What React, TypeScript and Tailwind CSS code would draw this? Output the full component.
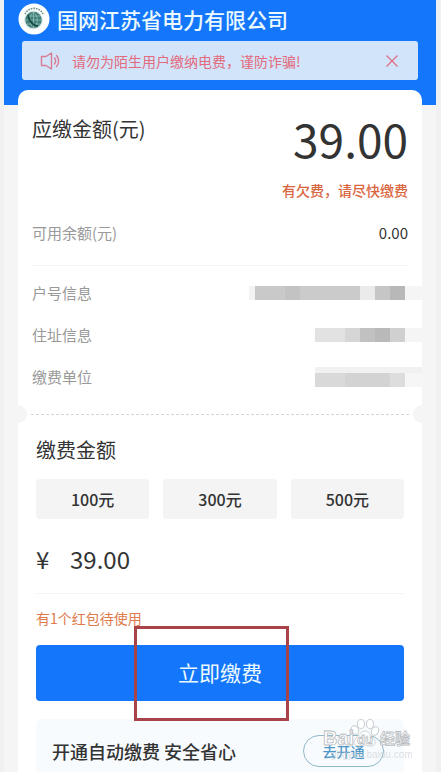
import React from "react";

const details = [
  {
    label: "户号信息",
    bar: "h-3.5",
    cells: [
      ["w-1.5", "bg-[#f3f3f3]"],
      ["w-[30px]", "bg-[#c9c9c9]"],
      ["w-[15px]", "bg-[#c3c3c3]"],
      ["w-[60px]", "bg-[#cbcbcb]"],
      ["w-[15px]", "bg-[#ebebeb]"],
      ["w-[15px]", "bg-[#c6c6c6]"],
      ["w-[15px]", "bg-[#b8b8b8]"],
      ["w-[17px]", "bg-[#f5f5f5]"],
    ],
  },
  {
    label: "住址信息",
    bar: "h-3.5",
    cells: [
      ["w-[30px]", "bg-[#e2e2e2]"],
      ["w-[15px]", "bg-[#d6d6d6]"],
      ["w-[15px]", "bg-[#c1c1c1]"],
      ["w-[15px]", "bg-[#b9b9b9]"],
      ["w-[15px]", "bg-[#d0d0d0]"],
      ["w-[17px]", "bg-[#f5f5f5]"],
    ],
  },
  {
    label: "缴费单位",
    bar: "h-5 border-t-[6px] border-[#f1f1f1]",
    cells: [
      ["w-[30px]", "bg-[#d9d9d9]"],
      ["w-[45px]", "bg-[#d3d3d3]"],
      ["w-[15px]", "bg-[#dddddd]"],
      ["w-[17px]", "bg-[#f6f6f6]"],
    ],
  },
];

const amounts = ["100元", "300元", "500元"];

function Logo() {
  return (
    <svg viewBox="0 0 32 32" className="size-8 shrink-0" aria-hidden="true">
      <circle cx="16" cy="16" r="15.5" fill="#fdfefe" />
      <path d="M7 11A10 10 0 0 1 25 11" fill="none" stroke="#6d9087" strokeWidth="1.6" strokeDasharray="1.6 1" />
      <circle cx="15.5" cy="17" r="9.5" fill="#dbe9e6" />
      <circle cx="15.5" cy="17" r="8.2" fill="#3d7f78" />
      <path d="M7.5 17h16M9 13h13M9 21h13M15.5 9v16M15.5 9c-5 4-5 12 0 16M15.5 9c5 4 5 12 0 16" fill="none" stroke="#9dc4bb" strokeWidth="0.7" />
      <path d="M10 12c1 6 4 10 10 11.5" fill="none" stroke="#174b49" strokeWidth="1.8" />
    </svg>
  );
}

function Speaker() {
  return (
    <svg viewBox="0 0 20 20" className="size-5 shrink-0" fill="none" stroke="#d97c92" strokeWidth="1.4" strokeLinejoin="round" strokeLinecap="round" aria-hidden="true">
      <path d="M1.500 5.500h4.500L11.500 2v16L6 14.500H1.500z" />
      <path d="M14.500 7c1.500 2 1.500 4 0 6M16.500 4.500c2.800 3.200 2.800 7.800 0 11" />
    </svg>
  );
}

function Watermark() {
  return (
    <svg viewBox="0 0 94 44" className="pointer-events-none absolute -right-2 top-0 h-11 w-[94px]" aria-hidden="true">
      <text x="14" y="39" fontSize="10" fill="#c6cbd0" fillOpacity="0.6" fontFamily="Liberation Sans, sans-serif">jingyan.baidu.com</text>
      <g fill="#ffffff" fillOpacity="0.85" stroke="#bfc3c7" strokeWidth="0.8">
        <ellipse cx="37" cy="11" rx="3.5" ry="4.5" transform="rotate(-20 37 11)" />
        <ellipse cx="43" cy="5" rx="3.5" ry="4.5" />
        <ellipse cx="52" cy="5" rx="3.5" ry="4.5" />
        <ellipse cx="57" cy="12" rx="3.5" ry="4.5" transform="rotate(20 57 12)" />
        <path d="M47 12c4 0 5 4 8 7 4 4 2 8-2 8-3 0-4-1-6-1s-4 1-7 1c-5 0-5-5-2-8s5-7 9-7z" />
      </g>
      <g fill="#ffffff" stroke="#b9bdc1" strokeWidth="0.8" fontFamily="Liberation Sans, Noto Sans CJK SC, sans-serif" fontWeight="700">
        <text x="5" y="26" fontSize="20">Bai</text>
        <text x="39" y="25" fontSize="13">du</text>
        <text x="62" y="25" fontSize="15">经验</text>
      </g>
    </svg>
  );
}

export default function App() {
  return (
    <div className="min-h-screen bg-[#f0f0f0] pl-1 pr-[5px] font-['Noto_Sans_CJK_SC',sans-serif] text-[#333333]">
      <div className="flex min-h-screen flex-col bg-[#f5f5f5]">
        <header className="bg-[#1477fb] px-3.5 pb-[25px] pt-[3px]">
          <div className="flex h-8 items-center gap-[7px]">
            <Logo />
            <h1 className="text-[21px] font-medium leading-8 text-[#ecfaff]">国网江苏省电力有限公司</h1>
          </div>
          <div className="mx-1 mt-1.5 flex h-[39px] items-center rounded-[3px] bg-[#d2e4fa] pl-[18px] pr-5">
            <Speaker />
            <p className="ml-3 flex-1 whitespace-nowrap text-sm text-[#e26a7c]">请勿为陌生用户缴纳电费，谨防诈骗!</p>
            <button type="button" aria-label="关闭">
              <svg viewBox="0 0 12 12" className="size-3" fill="none" stroke="#df7188" strokeWidth="1.3" aria-hidden="true">
                <path d="M.5.5l11 11M11.500.5l-11 11" />
              </svg>
            </button>
          </div>
        </header>

        <main className="mx-3.5 -mt-[15px] flex flex-1 flex-col">
          <section className="rounded-t-[10px] bg-white px-3.5 pt-[23px]">
            <div className="flex justify-between">
              <h2 className="text-xl leading-8">应缴金额(元)</h2>
              <p className="text-[46px] leading-[50px]">39.00</p>
            </div>
            <p className="mt-[15px] text-right text-sm font-medium leading-6 text-[#d9663f]">有欠费，请尽快缴费</p>
            <div className="mt-[19px] flex justify-between text-[15px] leading-6">
              <span className="text-[#999999]">可用余额(元)</span>
              <span>0.00</span>
            </div>
            <dl className="mt-5 border-t border-[#f4f4f4] pb-[7px] pt-1.5">
              {details.map((row) => (
                <div key={row.label} className="-mr-3.5 flex h-[42px] items-center justify-between">
                  <dt className="text-[15px] leading-6 text-[#999999]">{row.label}</dt>
                  <dd className={`flex ${row.bar}`}>
                    {row.cells.map(([width, color], i) => (
                      <span key={i} className={`${width} ${color}`} />
                    ))}
                  </dd>
                </div>
              ))}
            </dl>
          </section>

          <div className="flex h-[18px] items-center justify-between overflow-hidden bg-white">
            <span className="-ml-[9px] size-[18px] rounded-full bg-[#f5f5f5]" />
            <span className="mx-1 flex-1 border-t border-dashed border-[#d6d6d6]" />
            <span className="-mr-[9px] size-[18px] rounded-full bg-[#f5f5f5]" />
          </div>

          <section className="flex flex-1 flex-col bg-white px-[18px] pt-[11px]">
            <h2 className="text-xl leading-8">缴费金额</h2>
            <div className="mt-[13px] grid grid-cols-3 gap-3.5">
              {amounts.map((amount) => (
                <button key={amount} type="button" className="h-10 rounded-sm bg-[#f4f4f4] text-base font-medium">
                  {amount}
                </button>
              ))}
            </div>
            <p className="mt-6 flex gap-[18px] text-2xl leading-8">
              <span className="w-4">¥</span>
              <span>39.00</span>
            </p>
            <p className="mt-[18px] border-t border-[#f3f3f3] pt-3 text-sm leading-6 text-[#e07a4b]">有1个红包待使用</p>
            <div className="relative z-10 mt-[15px]">
              <button type="button" className="h-14 w-full rounded bg-[#1477fb] text-[21px] text-[#ecfaff]">
                立即缴费
              </button>
              <div className="pointer-events-none absolute -top-[19px] left-1/2 h-[95px] w-[155px] -translate-x-[86px] border-[3px] border-[#a8434a]" />
            </div>
            <div className="relative mt-[18px] flex flex-1 items-start justify-between rounded-t-md bg-[#f8fbfe] pb-1 pl-4 pr-5 pt-4">
              <p className="text-lg font-medium leading-8">开通自动缴费 安全省心</p>
              <button type="button" className="h-8 w-[81px] rounded-full border border-[#8fb9c9] text-sm font-medium text-[#4f97c6]">
                去开通
              </button>
              <Watermark />
            </div>
          </section>
        </main>
      </div>
    </div>
  );
}
